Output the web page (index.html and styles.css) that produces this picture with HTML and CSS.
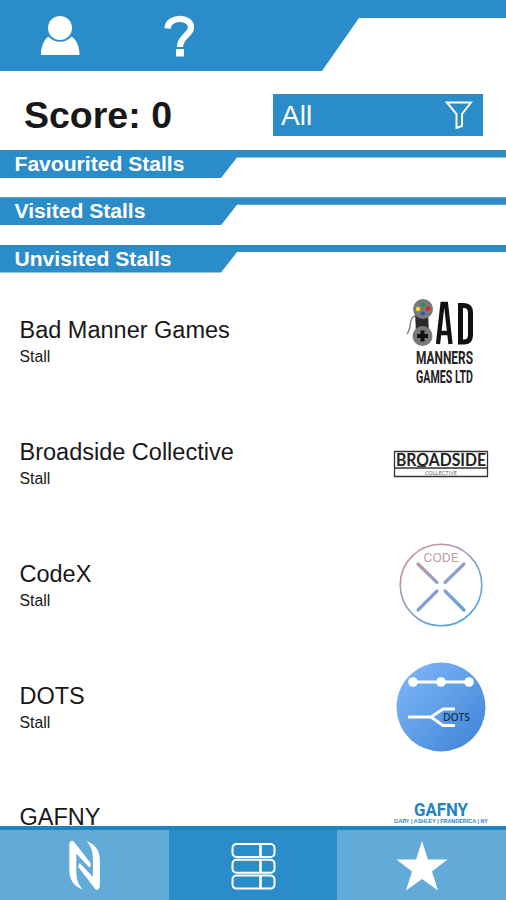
FILE: index.html
```html
<!DOCTYPE html>
<html lang="en">
<head>
<meta charset="utf-8">
<title>Stalls</title>
<link rel="stylesheet" href="styles.css">
</head>
<body>
<div class="app">
  <header class="header">
    <svg class="user" viewBox="0 0 40 40" fill="#fff"><circle cx="20" cy="13" r="12"/><path d="M8.500 21.500C14 28.500 26 28.500 31.500 21.500C36.500 25 39.500 31 39.500 40H1C1 31 4 25 8.500 21.500Z"/></svg>
    <svg class="help" viewBox="0 0 30 42"><path d="M3.500 13.500C4 1 27 0.500 27 12.500C27 20 16 21 16 32" fill="none" stroke="#fff" stroke-width="6.300"/><path d="M12 34h8v7.500h-8z" fill="#fff"/></svg>
  </header>
  <div class="toolbar">
    <h1 class="score">Score: 0</h1>
    <div class="filter"><span>All</span>
      <svg class="funnel" viewBox="0 0 28 28" fill="none" stroke="#fff" stroke-width="2"><path d="M2 1.500H26L17 13V25L11.500 27V13Z"/></svg>
    </div>
  </div>
  <h2 class="section"><span>Favourited Stalls</span></h2>
  <h2 class="section"><span>Visited Stalls</span></h2>
  <h2 class="section"><span>Unvisited Stalls</span></h2>
  <main class="list">
    <article class="row">
      <div><h3>Bad Manner Games</h3><p>Stall</p></div>
      <svg class="logo" viewBox="0 0 100 100">
        <g transform="translate(11 -1)">
          <path d="M14 25C4 28 10 36 4 44" fill="none" stroke="#888" stroke-width="1.500"/>
          <path d="M12 20H25L26 45H13Z" fill="#292b2d"/>
          <circle cx="20" cy="19" r="10" fill="#77797b"/><circle cx="19.500" cy="46" r="10" fill="#77797b"/>
          <path d="M19.500 40.500V51.500M14 46H25" stroke="#111" stroke-width="4"/>
          <circle cx="20" cy="14.500" r="2" fill="#23904b"/><circle cx="15" cy="19" r="2.200" fill="#f5df20"/><circle cx="25" cy="18.500" r="2.200" fill="#e52727"/><circle cx="20" cy="23.500" r="2" fill="#2455c7"/>
          <path d="M35 54L39.500 14H43L47.500 54M37 43H46" fill="none" stroke="#111" stroke-width="4.300"/>
          <path d="M57.500 15.500H61Q67.500 15.500 67.500 23V45Q67.500 52 61 52H57.500Z" fill="none" stroke="#111" stroke-width="5"/>
        </g>
        <text class="condensed" x="24" y="73" textLength="57" lengthAdjust="spacingAndGlyphs">MANNERS</text>
        <text class="condensed" x="24" y="91.500" textLength="57" lengthAdjust="spacingAndGlyphs">GAMES LTD</text>
      </svg>
    </article>
    <article class="row">
      <div><h3>Broadside Collective</h3><p>Stall</p></div>
      <svg class="logo" viewBox="0 0 100 100">
        <path d="M2.500 38.500H95.500V63.500H2.500ZM2.500 55H95.500" fill="#fff" stroke="#333" stroke-width="1.300"/>
        <text class="broadside" x="4" y="52.500" textLength="90" lengthAdjust="spacingAndGlyphs">BROADSIDE</text>
        <path d="M25 53.300H34" stroke="#222" stroke-width="1.200"/>
        <text class="micro" x="33" y="61.500" textLength="32">COLLECTIVE</text>
      </svg>
    </article>
    <article class="row">
      <div><h3>CodeX</h3><p>Stall</p></div>
      <svg class="logo" viewBox="0 0 100 100">
        <defs><linearGradient id="codex" gradientUnits="userSpaceOnUse" x1="20" y1="18" x2="72" y2="88"><stop stop-color="#cf8f9b"/><stop offset=".5" stop-color="#8c9fce"/><stop offset="1" stop-color="#4ba5e0"/></linearGradient></defs>
        <circle cx="49" cy="50" r="40.800" fill="none" stroke="url(#codex)" stroke-width="1.600"/>
        <path d="M26 29L45 47.500M72 29L53 47.500M26 75L45 56M72 75L53 56" stroke="url(#codex)" stroke-width="3.200" stroke-linecap="round"/>
        <text class="code" x="31.500" y="26.500" textLength="35" lengthAdjust="spacingAndGlyphs">CODE</text>
      </svg>
    </article>
    <article class="row">
      <div><h3>DOTS</h3><p>Stall</p></div>
      <svg class="logo" viewBox="0 0 100 100">
        <defs><linearGradient id="dots" x1="0" y1="0" x2="1" y2="1"><stop stop-color="#83bafa"/><stop offset="1" stop-color="#3c82d5"/></linearGradient></defs>
        <circle cx="49" cy="50" r="44.500" fill="url(#dots)"/>
        <path d="M21 25H77" stroke="#fff" stroke-width="2.800"/><g fill="#fff"><circle cx="21" cy="25" r="4.800"/><circle cx="49" cy="25" r="4.800"/><circle cx="77" cy="25" r="4.800"/></g>
        <path d="M16 60H39L51 52H63M39 60L51 68.500H63" fill="none" stroke="#fff" stroke-width="2.800"/>
        <text class="dots" x="51" y="63.500" textLength="27" lengthAdjust="spacingAndGlyphs">DOTS</text>
      </svg>
    </article>
    <article class="row">
      <div><h3>GAFNY</h3></div>
      <svg class="logo" viewBox="0 0 100 100">
        <text class="gafny" x="22" y="37.500" textLength="54" lengthAdjust="spacingAndGlyphs">GAFNY</text>
        <text class="members" x="2" y="45" textLength="94" lengthAdjust="spacingAndGlyphs">GARY | ASHLEY | FRANDERICA | NY</text>
      </svg>
    </article>
  </main>
  <nav class="tabs">
    <div class="tab"><svg viewBox="0 0 50 50" fill="#fff"><path id="wave" d="M12.700 -.3Q10.300 .5 10.300 3.500V29C10.300 39 15 45 23.700 48.500C19 43 17.500 39 17.300 30V12.500L30.500 26.700Q32.500 24 31.500 22L15 .7Q14 -.5 12.700 -.3Z"/><use href="#wave" transform="rotate(180 25.600 24.300)"/></svg></div>
    <div class="tab active"><svg viewBox="0 0 50 50" fill="none" stroke="#fff" stroke-width="2"><rect x="4.500" y="3" width="42" height="13" rx="4"/><rect x="4.500" y="18.800" width="42" height="13" rx="4"/><rect x="4.500" y="34.600" width="42" height="13" rx="4"/><path stroke-width="2.600" d="M32.500 3V16M32.500 19V32M32.500 35V47.500"/></svg></div>
    <div class="tab"><svg viewBox="0 0 50 50" fill="#fff"><path d="M25 0L31 18.500H50.500L35 30.500L41 49.500L25 38L9 49.500L15 30.500L-.5 18.500H19Z"/></svg></div>
  </nav>
</div>
</body>
</html>
```
FILE: styles.css
```css
* { box-sizing: border-box; }
body { margin: 0; background: #fff; color: #181818; font-family: "Liberation Sans", Arial, sans-serif; }
h1, h2, h3, p { margin: 0; }
svg { display: block; flex: none; }
.app { height: 900px; display: flex; flex-direction: column; overflow: hidden; }
.header {
  height: 71px; flex: none; display: flex; gap: 84px; padding: 15px 0 0 40px;
  background: #2a8dc9;
  clip-path: polygon(0 0, 100% 0, 100% 18px, 359px 18px, 322px 100%, 0 100%);
}
.user { width: 40px; height: 40px; }
.help { width: 30px; height: 42px; }
.toolbar { height: 79px; flex: none; display: flex; justify-content: space-between; padding: 23px 23px 0 24px; }
.score { font-size: 37.500px; line-height: 42px; }
.filter {
  width: 210px; height: 42px; display: flex; align-items: center; justify-content: space-between;
  padding: 0 10px 0 8px; background: #2a8dc9; color: #fff; font-size: 28px; line-height: 43px;
}
.funnel { width: 28px; height: 28px; }
.section {
  height: 28px; flex: none; margin-bottom: 19.300px; padding-left: 14.500px;
  background: #2a8dc9; color: #fff; font-size: 21.100px; line-height: 28px;
  clip-path: polygon(0 0, 100% 0, 100% 7.500px, 237px 7.500px, 221px 100%, 0 100%);
}
.list { flex: 1; min-height: 0; overflow: hidden; }
.row { height: 121.900px; display: flex; justify-content: space-between; padding: 0 14px 0 19.500px; }
.row h3 { margin-top: 24px; font-size: 23.500px; font-weight: 400; line-height: 28px; }
.row p { margin-top: 4px; font-size: 15.800px; line-height: 18px; }
.logo { width: 100px; height: 100px; margin: -1px 0 0; }
.condensed { font: 700 17.500px Roboto, sans-serif; fill: #222; }
.broadside { font: 700 16.500px Lato, sans-serif; fill: #222; }
.micro { font: 5px Lato, sans-serif; fill: #555; }
.code { font: 12px Roboto, sans-serif; fill: #bd9fae; }
.dots { font: 500 11px "Noto Sans", sans-serif; fill: #142f50; }
.gafny { font: 700 18px Roboto, sans-serif; fill: #2583c4; }
.members { font: 700 4.800px "Liberation Sans", sans-serif; fill: #2583c4; }
.tabs { height: 74px; flex: none; display: grid; grid-template-columns: repeat(3, 1fr); border-top: 4px solid #1d84bf; background: #2a8dc9; }
.tab { display: flex; justify-content: center; padding-top: 11px; background: #62abd9; }
.tab.active { background: #2a8dc9; }
.tab svg { width: 50px; height: 50px; overflow: visible; }
```
